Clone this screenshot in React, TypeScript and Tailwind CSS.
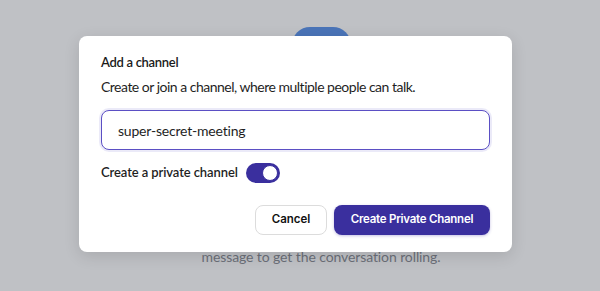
import { useState } from 'react';

export default function App() {
  const [name, setName] = useState('super-secret-meeting');
  const [isPrivate, setIsPrivate] = useState(true);

  return (
    <div
      className="relative h-[291px] w-[600px] overflow-hidden bg-[#bfc1c5]"
      style={{ fontFamily: 'Lato, "Noto Sans", sans-serif' }}
    >
      {/* page behind the overlay */}
      <div className="flex h-full flex-col items-center pl-[42px] pt-[27px]">
        <div className="h-[40px] w-[59px] rounded-t-[18px] bg-[#4a74b8]" />
        <div className="flex-1" />
        <p className="pb-[24px] text-[14px] tracking-[-0.1px] text-[#6b6f78]">message to get the conversation rolling.</p>
      </div>

      {/* dialog */}
      <div className="absolute left-[79px] top-[36px] w-[433px] rounded-lg bg-white px-[22px] pb-[17px] pt-[16px] shadow-[0_4px_16px_rgba(0,0,0,0.12)]">
        <h2 className="text-[13px] font-semibold leading-[20px] tracking-[-0.3px] text-[#1a1a1a]">Add a channel</h2>
        <p className="mt-[4px] text-[14px] leading-[22px] tracking-[-0.5px] text-[#1f1f1f]">
          Create or join a channel, where multiple people can talk.
        </p>
        <input
          value={name}
          onChange={(e) => setName(e.target.value)}
          className="mt-[12px] h-[40px] w-full rounded-lg border border-[#5b4fc4] bg-white px-[16px] text-[14px] tracking-[-0.2px] text-[#1f1f1f] shadow-[0_0_0_2px_rgba(91,79,196,0.12)] outline-none"
        />
        <div className="mt-[13px] flex items-center gap-[8px]">
          <span className="text-[13px] font-semibold tracking-[-0.1px] text-[#1f1f1f]">Create a private channel</span>
          <button
            onClick={() => setIsPrivate(!isPrivate)}
            className={`flex h-[20px] w-[34px] items-center rounded-full p-[2px] ${isPrivate ? 'justify-end bg-[#3a2f9e]' : 'justify-start bg-gray-300'}`}
          >
            <span className="h-[16px] w-[16px] rounded-full border border-[#3a2f9e] bg-white" />
          </button>
        </div>
        <div
          className="mt-[22px] flex justify-end gap-[7px]"
          style={{ fontFamily: 'Inter, sans-serif' }}
        >
          <button className="h-[30px] w-[72px] rounded-lg border border-[#dcdcdc] bg-white text-[11.5px] font-semibold text-[#111]">
            Cancel
          </button>
          <button className="h-[30px] w-[156px] rounded-lg bg-[#3a2f9e] text-[11.5px] font-semibold tracking-[-0.25px] text-white shadow-[0_1px_3px_rgba(58,47,158,0.3)]">
            Create Private Channel
          </button>
        </div>
      </div>
    </div>
  );
}
